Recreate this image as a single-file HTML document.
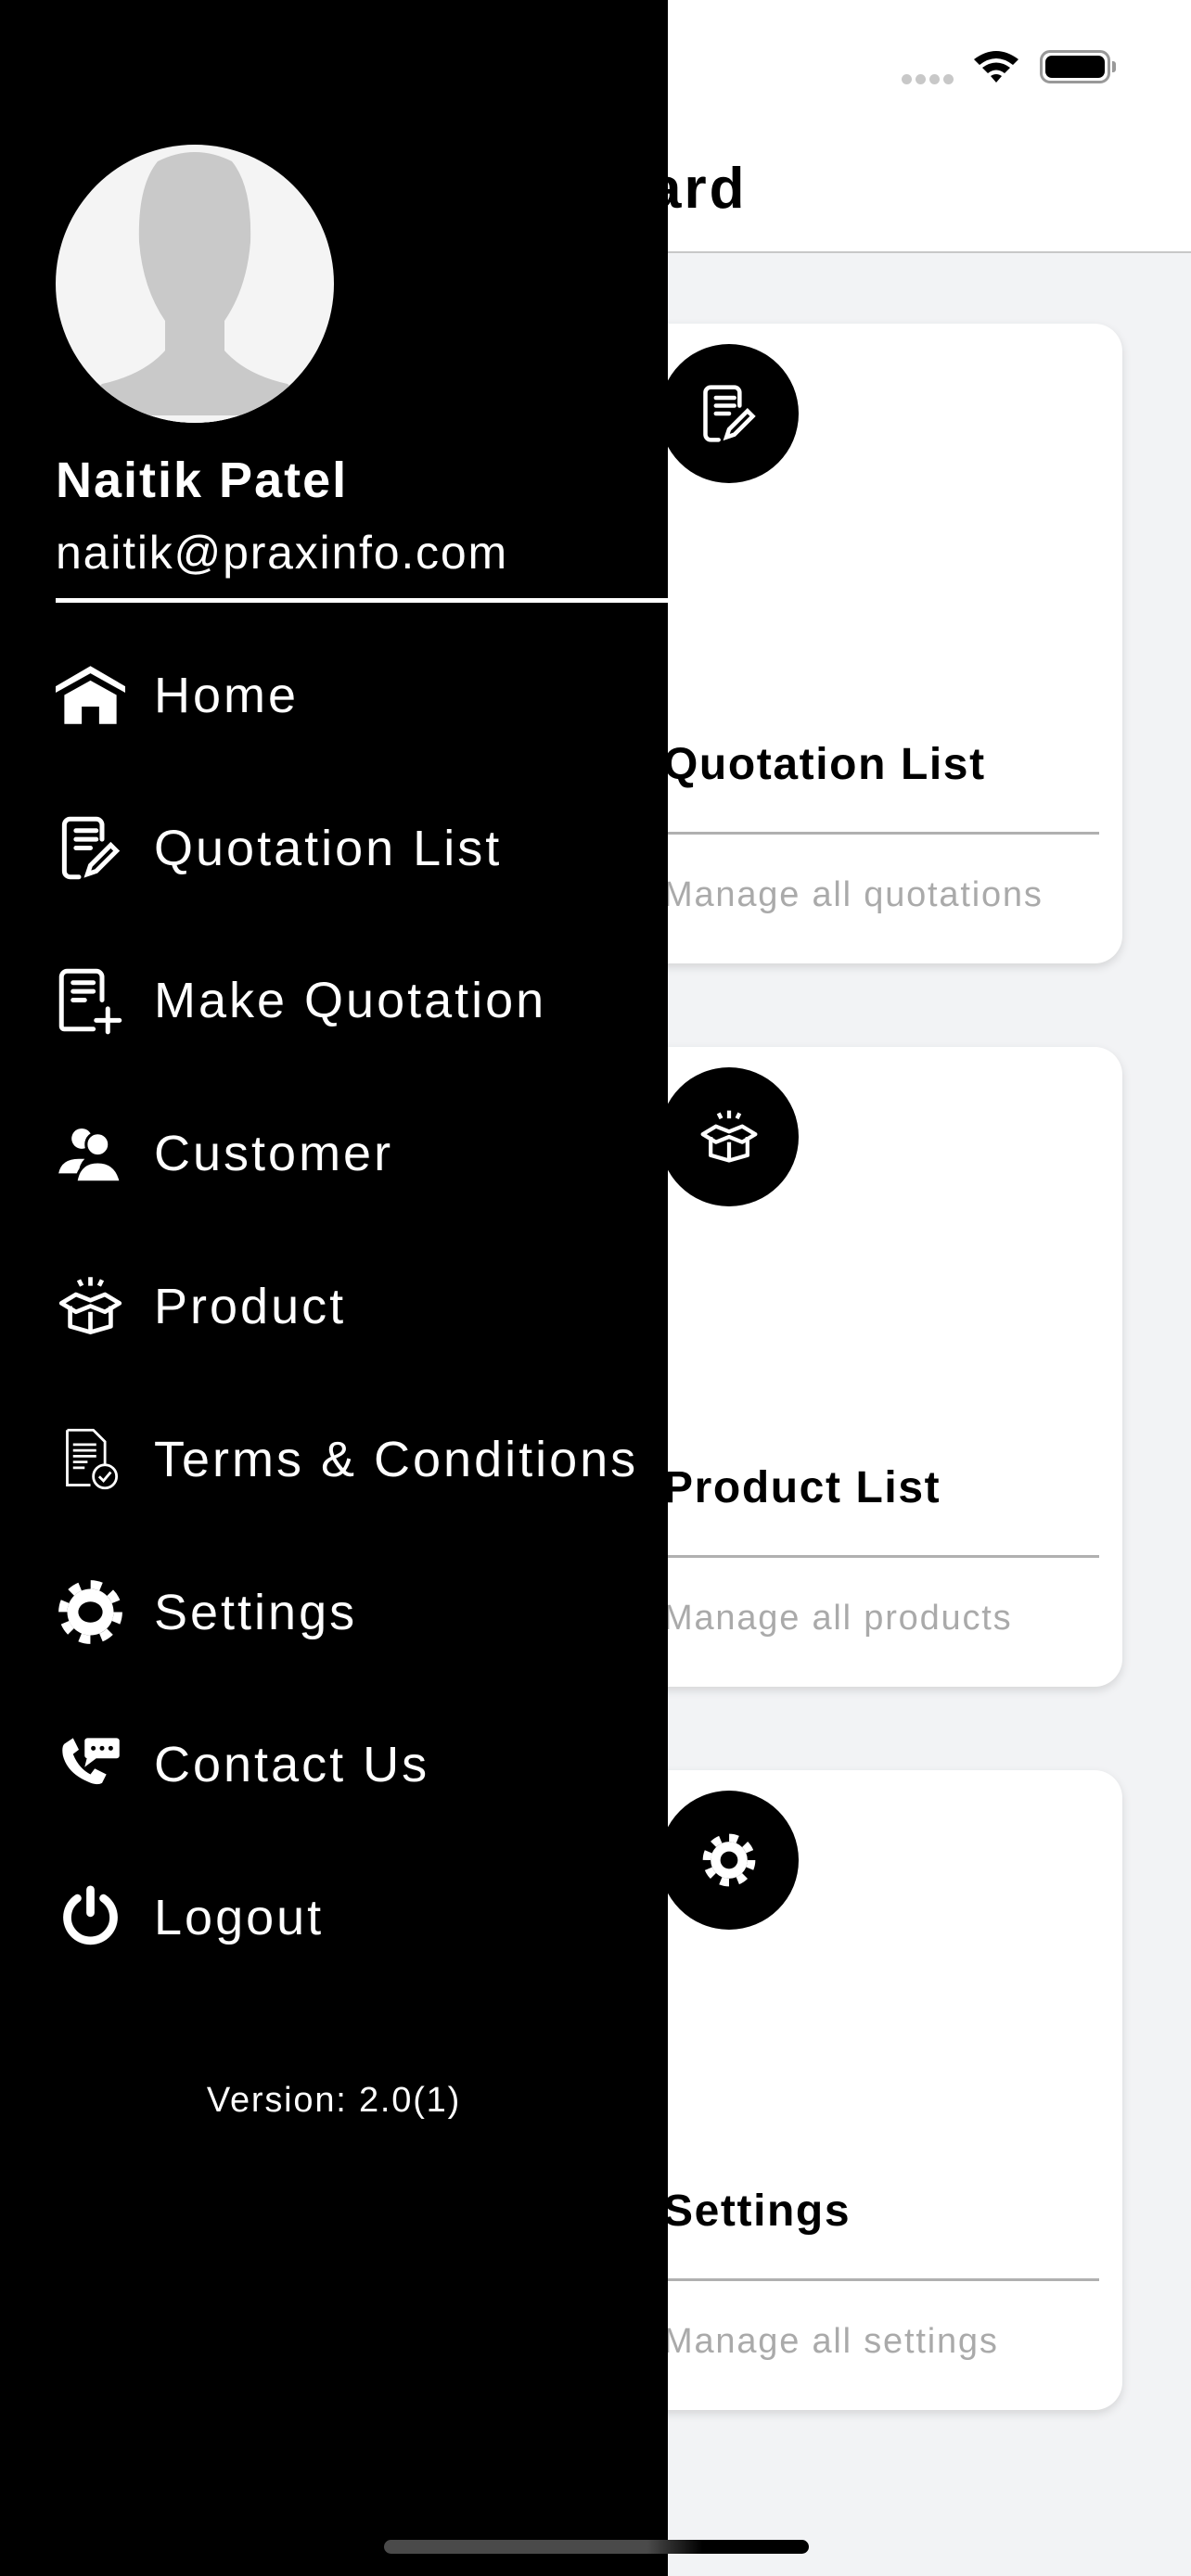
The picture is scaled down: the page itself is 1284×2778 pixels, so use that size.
<!DOCTYPE html>
<html><head><meta charset="utf-8"><style>
*{margin:0;padding:0;box-sizing:border-box}
body{width:1284px;height:2778px;position:relative;overflow:hidden;background:#f2f3f5;font-family:"Liberation Sans",sans-serif}
.hdr{position:absolute;left:0;top:0;width:1284px;height:273px;background:#fff;border-bottom:2px solid #c8c8c8}
.card{position:absolute;left:400px;width:810px;height:690px;background:#fff;border-radius:30px;box-shadow:0 4px 10px rgba(0,0,0,.12)}
.circ{position:absolute;left:311px;top:22px;width:150px;height:150px;border-radius:50%;background:#000}
.circ svg{position:absolute;left:41px;top:41px}
.ct{position:absolute;left:315px;top:448px;font-size:48px;font-weight:bold;color:#000;letter-spacing:1.6px}
.cd{position:absolute;left:315px;right:25px;top:548px;height:3px;background:#b0b0b0}
.cs{position:absolute;left:315px;top:595px;font-size:38px;color:#aaa;letter-spacing:1.8px}
.drawer{position:absolute;left:0;top:0;width:720px;height:2778px;background:#000;color:#fff}
.row{position:absolute;left:0;height:90px;width:720px}
.row svg{position:absolute;left:60px;top:8px}
.row span{position:absolute;left:166px;top:15px;font-size:54px;white-space:nowrap;letter-spacing:3px}
</style></head><body>
<div class="hdr">
<div style="position:absolute;left:700px;top:168px;font-size:62px;font-weight:bold;letter-spacing:3px">ard</div>
<div style="position:absolute;left:972px;top:78px">
<span style="display:inline-block;width:11px;height:11px;border-radius:50%;background:#c8c8c8;margin-right:4px"></span><span style="display:inline-block;width:11px;height:11px;border-radius:50%;background:#c8c8c8;margin-right:4px"></span><span style="display:inline-block;width:11px;height:11px;border-radius:50%;background:#c8c8c8;margin-right:4px"></span><span style="display:inline-block;width:11px;height:11px;border-radius:50%;background:#c8c8c8"></span></div>
<svg style="position:absolute;left:1048px;top:52px" width="52" height="40" viewBox="0 0 52 40"><path d="M2 12 Q26 -6 50 12 L44 18 Q26 4 8 18Z M11 21 Q26 10 41 21 L35 27 Q26 20 17 27Z M20 30 Q26 26 32 30 L26 37Z" fill="#000"/></svg>
<div style="position:absolute;left:1121px;top:54px;width:76px;height:36px;border:3px solid #999;border-radius:11px;padding:3px"><div style="width:100%;height:100%;background:#000;border-radius:7px"></div></div>
<div style="position:absolute;left:1199px;top:66px;width:4px;height:12px;background:#999;border-radius:0 3px 3px 0"></div>
</div>

<div class="card" style="top:349px"><div class="circ"><svg width="68" height="68" viewBox="0 0 24 24" fill="none" stroke="#fff" stroke-width="1.6" stroke-linecap="round"><path d="M16 9V4a2 2 0 0 0-2-2H5a2 2 0 0 0-2 2v16a2 2 0 0 0 2 2h3"/><path d="M7 6h7M7 9h7M7 12h5"/><path d="M11 21l1-3 7-7 2 2-7 7z"/></svg></div>
<div class="ct">Quotation List</div><div class="cd"></div><div class="cs">Manage all quotations</div></div>

<div class="card" style="top:1129px"><div class="circ"><svg width="68" height="68" viewBox="0 0 24 24" fill="none" stroke="#fff" stroke-width="1.5" stroke-linejoin="round"><path d="M8 3l1 2M12 2v3M16 3l-1 2"/><path d="M5 12v7l7 2 7-2v-7"/><path d="M12 14v7"/><path d="M2 11l5-3 5 2 5-2 5 3-5 3-5-2-5 2z"/></svg></div>
<div class="ct">Product List</div><div class="cd"></div><div class="cs">Manage all products</div></div>

<div class="card" style="top:1909px"><div class="circ"><svg width="68" height="68" viewBox="0 0 24 24"><circle cx="12" cy="12" r="7" fill="#fff"/><circle cx="12" cy="12" r="8.5" fill="none" stroke="#fff" stroke-width="3" stroke-dasharray="3.3 3.37"/><circle cx="12" cy="12" r="3.3" fill="#000"/></svg></div>
<div class="ct">Settings</div><div class="cd"></div><div class="cs">Manage all settings</div></div>

<div class="drawer">
<div style="position:absolute;left:60px;top:156px;width:300px;height:300px;border-radius:50%;background:#f4f4f4;overflow:hidden">
<svg width="300" height="300" viewBox="0 0 300 300"><path d="M110 18 Q150 -2 190 18 Q212 45 210 105 Q206 155 182 190 L182 222 Q205 248 250 258 L272 280 L272 300 L28 300 L28 280 L50 258 Q95 248 118 222 L118 190 Q94 155 90 105 Q88 45 110 18Z" fill="#c9c9c9"/><rect x="0" y="292" width="300" height="10" fill="#f4f4f4"/></svg></div>
<div style="position:absolute;left:60px;top:487px;font-size:54px;font-weight:bold;letter-spacing:2px">Naitik Patel</div>
<div style="position:absolute;left:60px;top:567px;font-size:50px;letter-spacing:1.8px">naitik@praxinfo.com</div>
<div style="position:absolute;left:60px;top:645px;width:660px;height:5px;background:#fff"></div>

<div class="row" style="top:704px"><svg width="75" height="75" viewBox="0 0 24 24" fill="#fff"><path d="M12 2L0 9v2.2L12 4.5 24 11.2V9z"/><path d="M3 12l9-5 9 5v10h-6v-6H9v6H3z"/></svg><span>Home</span></div>
<div class="row" style="top:869px"><svg width="75" height="75" viewBox="0 0 24 24" fill="none" stroke="#fff" stroke-width="1.6" stroke-linecap="round"><path d="M16 9V4a2 2 0 0 0-2-2H5a2 2 0 0 0-2 2v16a2 2 0 0 0 2 2h3"/><path d="M7 6h7M7 9h7M7 12h5"/><path d="M11 21l1-3 7-7 2 2-7 7z"/></svg><span>Quotation List</span></div>
<div class="row" style="top:1033px"><svg width="75" height="75" viewBox="0 0 24 24" fill="none" stroke="#fff" stroke-width="1.6" stroke-linecap="round"><path d="M13 22H3a1 1 0 0 1-1-1V4a2 2 0 0 1 2-2h10a2 2 0 0 1 2 2v8"/><path d="M6 6h7M6 9h7M6 12h4M18 15v8M14 19h8"/></svg><span>Make Quotation</span></div>
<div class="row" style="top:1198px"><svg width="75" height="75" viewBox="0 0 24 24" fill="#fff"><circle cx="9" cy="7" r="3.5"/><path d="M1 19q1-5 7-5h2q-2 2-2 5z"/><circle cx="14.5" cy="9" r="4" stroke="#000" stroke-width="1"/><path d="M7 22q1-7 7.5-7 6.5 0 8 7z" stroke="#000" stroke-width="1"/></svg><span>Customer</span></div>
<div class="row" style="top:1363px"><svg width="75" height="75" viewBox="0 0 24 24" fill="none" stroke="#fff" stroke-width="1.5" stroke-linejoin="round"><path d="M8 3l1 2M12 2v3M16 3l-1 2"/><path d="M5 12v7l7 2 7-2v-7"/><path d="M12 14v7"/><path d="M2 11l5-3 5 2 5-2 5 3-5 3-5-2-5 2z"/></svg><span>Product</span></div>
<div class="row" style="top:1528px"><svg width="75" height="75" viewBox="0 0 24 24" fill="none" stroke="#fff" stroke-width="0.9"><path d="M4 2h9l4 4v8M12 21H4z"/><path d="M4 2v19h8"/><path d="M6 7h8M6 9h8M6 11h8M6 13h5M6 15h4"/><circle cx="17" cy="18" r="4" fill="#000"/><path d="M15 18l1.5 1.5 2.5-3"/></svg><span>Terms &amp; Conditions</span></div>
<div class="row" style="top:1693px"><svg width="75" height="75" viewBox="0 0 24 24"><circle cx="12" cy="12" r="8" fill="#fff"/><circle cx="12" cy="12" r="9.5" fill="none" stroke="#fff" stroke-width="3" stroke-dasharray="3.7 3.76"/><ellipse cx="12" cy="12" rx="4.2" ry="3.6" fill="#000"/></svg><span>Settings</span></div>
<div class="row" style="top:1857px"><svg width="75" height="75" viewBox="0 0 24 24" fill="#fff"><path d="M3 5l3-2 2 4-2 1.5q2 5 6 7l1.5-2 4 2-1.5 3q-2 1-5-.5Q4 15 2.5 9 2 6 3 5z"/><rect x="10" y="3" width="12" height="7" rx="1"/><path d="M11 9l-1 4 4-3z"/><circle cx="13" cy="6.5" r=".8" fill="#000"/><circle cx="16" cy="6.5" r=".8" fill="#000"/><circle cx="19" cy="6.5" r=".8" fill="#000"/></svg><span>Contact Us</span></div>
<div class="row" style="top:2022px"><svg width="75" height="75" viewBox="0 0 24 24" fill="none" stroke="#fff" stroke-width="2.8" stroke-linecap="round"><path d="M7.5 5.5A8 8 0 1 0 16.5 5.5"/><path d="M12 2.5v8"/></svg><span>Logout</span></div>

<div style="position:absolute;left:0;width:720px;text-align:center;top:2244px;font-size:38px;letter-spacing:1.8px">Version: 2.0(1)</div>
</div>
<div style="position:absolute;left:414px;top:2739px;width:458px;height:15px;border-radius:8px;background:linear-gradient(90deg,#4a4a4a 0,#4a4a4a 62%,#000 75%)"></div>
</body></html>
